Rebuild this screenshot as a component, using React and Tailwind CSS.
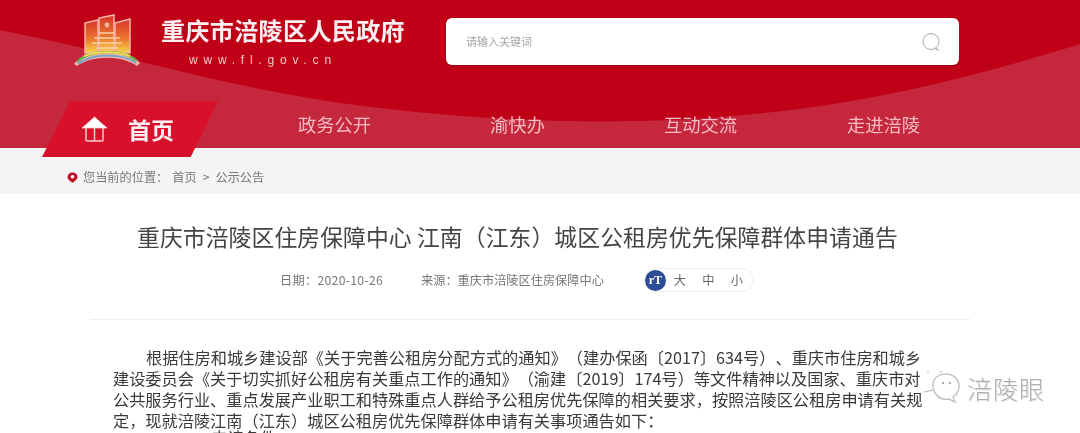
const NAV_ITEMS = ['政务公开', '渝快办', '互动交流', '走进涪陵'];

const BODY_LINES = [
  '建设委员会《关于切实抓好公租房有关重点工作的通知》（渝建〔2019〕174号）等文件精神以及国家、重庆市对',
  '公共服务行业、重点发展产业职工和特殊重点人群给予公租房优先保障的相关要求，按照涪陵区公租房申请有关规',
  '定，现就涪陵江南（江东）城区公租房优先保障群体申请有关事项通告如下：',
];

const Logo = () => (
  <svg width="70" height="54" viewBox="0 0 70 54" className="block">
    <defs>
      <linearGradient id="bld" x1="0" y1="0" x2="0" y2="1">
        <stop offset="0" stopColor="#d8342c" />
        <stop offset="0.6" stopColor="#ec7a30" />
        <stop offset="1" stopColor="#f6d84a" />
      </linearGradient>
    </defs>
    <g fill="url(#bld)" stroke="#f7b4a6" strokeWidth="1.5">
      <path d="M13 10 L26 7 L26 40 L13 40 Z" />
      <path d="M43 10 L58 6 L58 40 L43 40 Z" />
      <path d="M27 5 L42 2 L42 40 L27 40 Z" />
    </g>
    <circle cx="35" cy="12" r="2.4" fill="#f7b99a" />
    <g stroke="#f8cfa6" strokeWidth="1.7" fill="none">
      <path d="M27 20 H43 M22 25 H48 M20 30 H50 M24 35 H46" />
    </g>
    <path d="M2 51 C16 33 54 33 68 50 L65 53 C50 42 20 42 5 53 Z" fill="#f5b0a8" />
    <path d="M5 49 C18 36 52 36 65 48" stroke="#62ad4e" strokeWidth="2.2" fill="none" />
    <path d="M12 43 C26 38 44 38 58 43" stroke="#e9e04c" strokeWidth="2" fill="none" />
    <path d="M6 51 C20 40 50 40 64 50" stroke="#6aa9cf" strokeWidth="1.8" fill="none" />
  </svg>
);

const HomeIcon = () => (
  <svg width="27" height="27" viewBox="0 0 27 27" className="block">
    <path d="M13.5 1 L26 12 H1 Z" fill="#fff" stroke="#f6c9cd" strokeWidth="0.8" strokeLinejoin="round" />
    <path d="M5 12 V24 Q5 25 6 25 H21 Q22 25 22 24 V12 M13.5 12 V25" fill="none" stroke="#f6c9cd" strokeWidth="1.5" />
  </svg>
);

const WeChatMark = () => (
  <svg width="38" height="36" viewBox="0 0 38 36" className="block">
    <path
      d="M11 15 C11 7 18 4 24 4 C31 4 37 9 37 16 C37 22 34 25 31 27 L33 32 L27 29 C18 31 11 24 11 15 Z"
      fill="#ffffffd0"
      stroke="#c2c2c2"
      strokeWidth="1.4"
    />
    <circle cx="21" cy="13" r="1.2" fill="#aaa" />
    <circle cx="28" cy="13" r="1.2" fill="#aaa" />
    <path d="M5 2 H7 M18 2 H20 M2 22 L11 20" stroke="#b5b5b5" strokeWidth="1.2" />
  </svg>
);

export default function App() {
  return (
    <div className="relative h-[433px] w-[1080px] overflow-hidden bg-white blur-[0.3px] font-['Noto_Sans_CJK_SC','Noto_Sans',sans-serif]">
      <header className="relative h-[148px] bg-[#bf0017]">
        <svg className="absolute inset-0" width="1080" height="148" viewBox="0 0 1080 148">
          <path
            d="M0 30 C140 58 240 92 380 108 C470 119 560 123 640 121 C780 117 900 100 1080 44 V148 H0 Z"
            fill="#c5283d"
          />
        </svg>

        <div className="relative flex h-[102px] items-start">
          <div className="ml-[72px] mt-[13px]">
            <Logo />
          </div>
          <div className="ml-[19px] mt-[12px] w-[285px]">
            <h1 className="text-[24px] leading-[36px] font-bold tracking-[0.4px] whitespace-nowrap text-[#fbeef0]">
              重庆市涪陵区人民政府
            </h1>
            <p className="ml-[28px] mt-[4px] text-[12px] leading-[16px] tracking-[5.8px] text-[#f4c6cb] font-['Liberation_Sans',sans-serif]">
              www.fl.gov.cn
            </p>
          </div>
          <div className="mt-[18px] flex h-[47px] w-[513px] items-center justify-between rounded-md bg-white pl-[20px] pr-[18px] shadow-[0_1px_2px_rgba(90,0,10,0.4)]">
            <span className="text-[11px] text-[#a5a5a5]">请输入关键词</span>
            <svg width="20" height="20" viewBox="0 0 20 20">
              <circle cx="10" cy="9.5" r="8" fill="none" stroke="#a9a9a9" strokeWidth="1" />
              <path d="M14.5 16 L17.5 18.5" stroke="#a9a9a9" strokeWidth="1.2" />
            </svg>
          </div>
        </div>

        <nav className="relative flex h-[46px]">
          <div className="ml-[42px] mb-[-9px] mt-[-1px] flex h-[56px] w-[176px] items-center bg-[#d7112b] pl-[39px] [clip-path:polygon(16%_0,100%_0,84.5%_100%,0_100%)]">
            <HomeIcon />
            <span className="ml-[20px] text-[23px] font-bold text-[#fbeef0]">首页</span>
          </div>
          <ul className="ml-[25px] flex">
            {NAV_ITEMS.map(item => (
              <li key={item} className="w-[183px] pb-[4px] text-center text-[18.3px] leading-[44px] text-[#f5bcc3]">
                {item}
              </li>
            ))}
          </ul>
        </nav>
      </header>

      <div className="flex h-[46px] items-center bg-[#f4f4f4] pl-[67px] pt-[12px] text-[12.2px] text-[#777]">
        <svg width="11" height="11" viewBox="0 0 11 11" className="mr-[5px]">
          <path d="M5.5 0.5 C9 0.5 10.5 3 10.5 5 C10.5 7.5 7.5 9.5 5.5 10.8 C3.5 9.5 0.5 7.5 0.5 5 C0.5 3 2 0.5 5.5 0.5 Z" fill="#c21229" />
          <circle cx="5.5" cy="4.8" r="1.8" fill="#fff" />
        </svg>
        <span>您当前的位置：</span>
        <span className="ml-[4px]">首页</span>
        <span className="mx-[6px]">&gt;</span>
        <span>公示公告</span>
      </div>

      <main>
        <h2 className="mt-[25px] whitespace-nowrap pl-[137px] text-[22.8px] leading-[36px] tracking-[0.1px] text-[#444]">
          重庆市涪陵区住房保障中心 江南（江东）城区公租房优先保障群体申请通告
        </h2>

        <div className="ml-[90px] mt-[13px] flex h-[52px] w-[880px] items-start border-b border-[#efefef] pl-[190px] text-[12.2px] text-[#777]">
          <span className="mt-[3px] tracking-[0.3px]">日期：2020-10-26</span>
          <span className="ml-[38px] mt-[3px]">来源：重庆市涪陵区住房保障中心</span>
          <div className="ml-[40px] flex h-[24px] w-[110px] items-center rounded-full border border-[#eee] pr-[10px]">
            <span className="flex h-[21px] w-[21px] items-center justify-center rounded-full bg-[#2c4d96] font-['Liberation_Serif',serif] text-[12px] font-bold text-white">
              rT
            </span>
            <span className="ml-[8px] flex flex-1 justify-between text-[#666]">
              <span>大</span>
              <span>中</span>
              <span>小</span>
            </span>
          </div>
        </div>

        <article className="mt-[27px] pl-[113px] text-[16.2px] leading-[21px] whitespace-nowrap text-[#3a3a3a] [text-spacing-trim:space-all]">
          <p className="pl-[33px]">
            根据住房和城乡建设部《关于完善公租房分配方式的通知》（建办保函〔2017〕634号）、重庆市住房和城乡
          </p>
          {BODY_LINES.map(line => (
            <p key={line}>{line}</p>
          ))}
          <p className="pl-[66px] mt-[-4px]">一、申请条件</p>
        </article>
      </main>

      <div className="absolute left-[922px] top-[370px] flex items-center">
        <WeChatMark />
        <span className="ml-[7px] text-[25px] leading-[32px] tracking-[1px] font-light text-[#b0b0b0] [text-shadow:1px_1px_0_#e6e6e6]">
          涪陵眼
        </span>
      </div>
    </div>
  );
}
